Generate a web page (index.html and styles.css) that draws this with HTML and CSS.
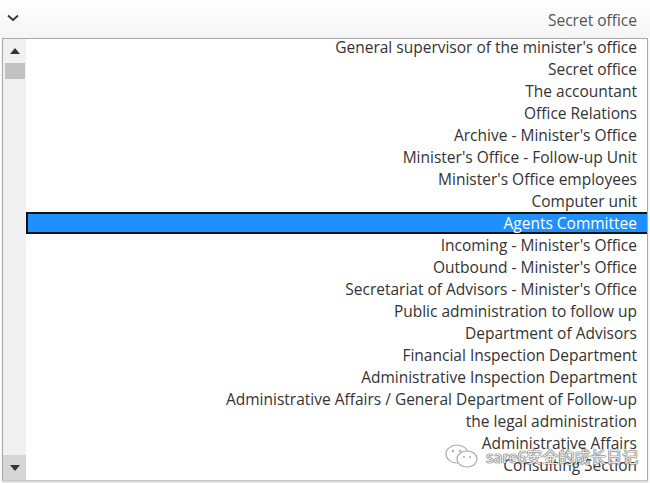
FILE: index.html
```html
<!DOCTYPE html>
<html>
<head>
<meta charset="utf-8">
<link rel="stylesheet" href="styles.css">
</head>
<body>
<div class="page">
  <div class="select">
    <svg class="chev" width="12" height="8" viewBox="0 0 12 8"><path d="M1 1.5 L6 6 L11 1.5" fill="none" stroke="#333" stroke-width="1.8"/></svg>
    <span class="value">Secret office</span>
  </div>
  <div class="listbox">
    <div class="scrollbar">
      <div class="sb-up"><svg width="10" height="6" viewBox="0 0 10 6"><path d="M0 6 L5 0 L10 6 Z" fill="#333"/></svg></div>
      <div class="sb-thumb"></div>
      <div class="sb-track"></div>
      <div class="sb-down"><svg width="10" height="6" viewBox="0 0 10 6"><path d="M0 0 L5 6 L10 0 Z" fill="#333"/></svg></div>
    </div>
    <div class="items">
      <div class="list">
        <div class="item">General supervisor of the minister's office</div>
        <div class="item">Secret office</div>
        <div class="item">The accountant</div>
        <div class="item">Office Relations</div>
        <div class="item">Archive - Minister's Office</div>
        <div class="item">Minister's Office - Follow-up Unit</div>
        <div class="item">Minister's Office employees</div>
        <div class="item">Computer unit</div>
        <div class="item selected">Agents Committee</div>
        <div class="item">Incoming - Minister's Office</div>
        <div class="item">Outbound - Minister's Office</div>
        <div class="item">Secretariat of Advisors - Minister's Office</div>
        <div class="item">Public administration to follow up</div>
        <div class="item">Department of Advisors</div>
        <div class="item">Financial Inspection Department</div>
        <div class="item">Administrative Inspection Department</div>
        <div class="item">Administrative Affairs / General Department of Follow-up</div>
        <div class="item">the legal administration</div>
        <div class="item">Administrative Affairs</div>
        <div class="item">Consulting Section</div>
      </div>
    </div>
  </div>
  <div class="watermark">
    <svg width="36" height="26" viewBox="0 0 36 26"><g fill="none" stroke="#aaa" stroke-width="1.2"><ellipse cx="13" cy="11" rx="11" ry="9"/><ellipse cx="23" cy="16" rx="10" ry="8" fill="#fff"/></g><g fill="#aaa"><circle cx="9" cy="8" r="1.2"/><circle cx="16" cy="8" r="1.2"/><circle cx="20" cy="14" r="1"/><circle cx="26" cy="14" r="1"/></g></svg>
    <span class="wm-text">sare6安全的成长日记</span>
  </div>
</div>
</body>
</html>
```
FILE: styles.css
```css
html, body {
  margin: 0;
  padding: 0;
  background: #fff;
}
.page {
  position: relative;
  width: 650px;
  height: 483px;
  overflow: hidden;
  font-family: "Open Sans", "Noto Sans", sans-serif;
}
.select {
  height: 38px;
  box-sizing: border-box;
  display: flex;
  align-items: center;
  justify-content: space-between;
  padding: 0 13px 0 7px;
  background: linear-gradient(#ffffff, #f5f5f5);
}
.chev {
  display: block;
  margin-bottom: 2px;
}
.value {
  font-size: 15.5px;
  color: #555;
  margin-top: 1px;
}
.listbox {
  margin: 0 2px 0 2px;
  height: 443px;
  box-sizing: border-box;
  border: 1px solid #a8a8a8;
  border-bottom-color: #c8c8c8;
  display: flex;
  box-shadow: 0 2px 2px rgba(0,0,0,0.15);
  background: #fff;
}
.scrollbar {
  width: 23px;
  flex: none;
  display: flex;
  flex-direction: column;
  align-items: center;
  background: #f0f0f0;
}
.sb-up {
  height: 24px;
  width: 100%;
  display: flex;
  align-items: center;
  justify-content: center;
}
.sb-thumb {
  width: 20px;
  height: 16px;
  background: #c1c1c1;
}
.sb-track {
  flex: 1;
}
.sb-down {
  height: 25px;
  width: 100%;
  display: flex;
  align-items: center;
  justify-content: center;
  background: #d6d6d6;
}
.items {
  flex: 1;
  overflow: hidden;
}
.list {
  margin-top: -3px;
}
.item {
  height: 22px;
  line-height: 22px;
  text-align: right;
  padding-right: 10px;
  font-size: 15.5px;
  color: #333;
  white-space: nowrap;
}
.item.selected {
  background: #1e90ff;
  color: #fff;
  border: 2px solid #111;
  height: 18px;
  line-height: 18px;
  margin-right: -2px;
  padding-right: 10px;
}
.watermark {
  position: absolute;
  left: 444px;
  top: 443px;
  display: flex;
  align-items: center;
  gap: 6px;
}
.wm-text {
  font-family: "Noto Sans CJK SC", sans-serif;
  font-size: 16px;
  color: rgba(255,255,255,0.9);
  text-shadow: 0 0 1px #555, 0 0 1px #555, 0 0 1px #555;
}
```
